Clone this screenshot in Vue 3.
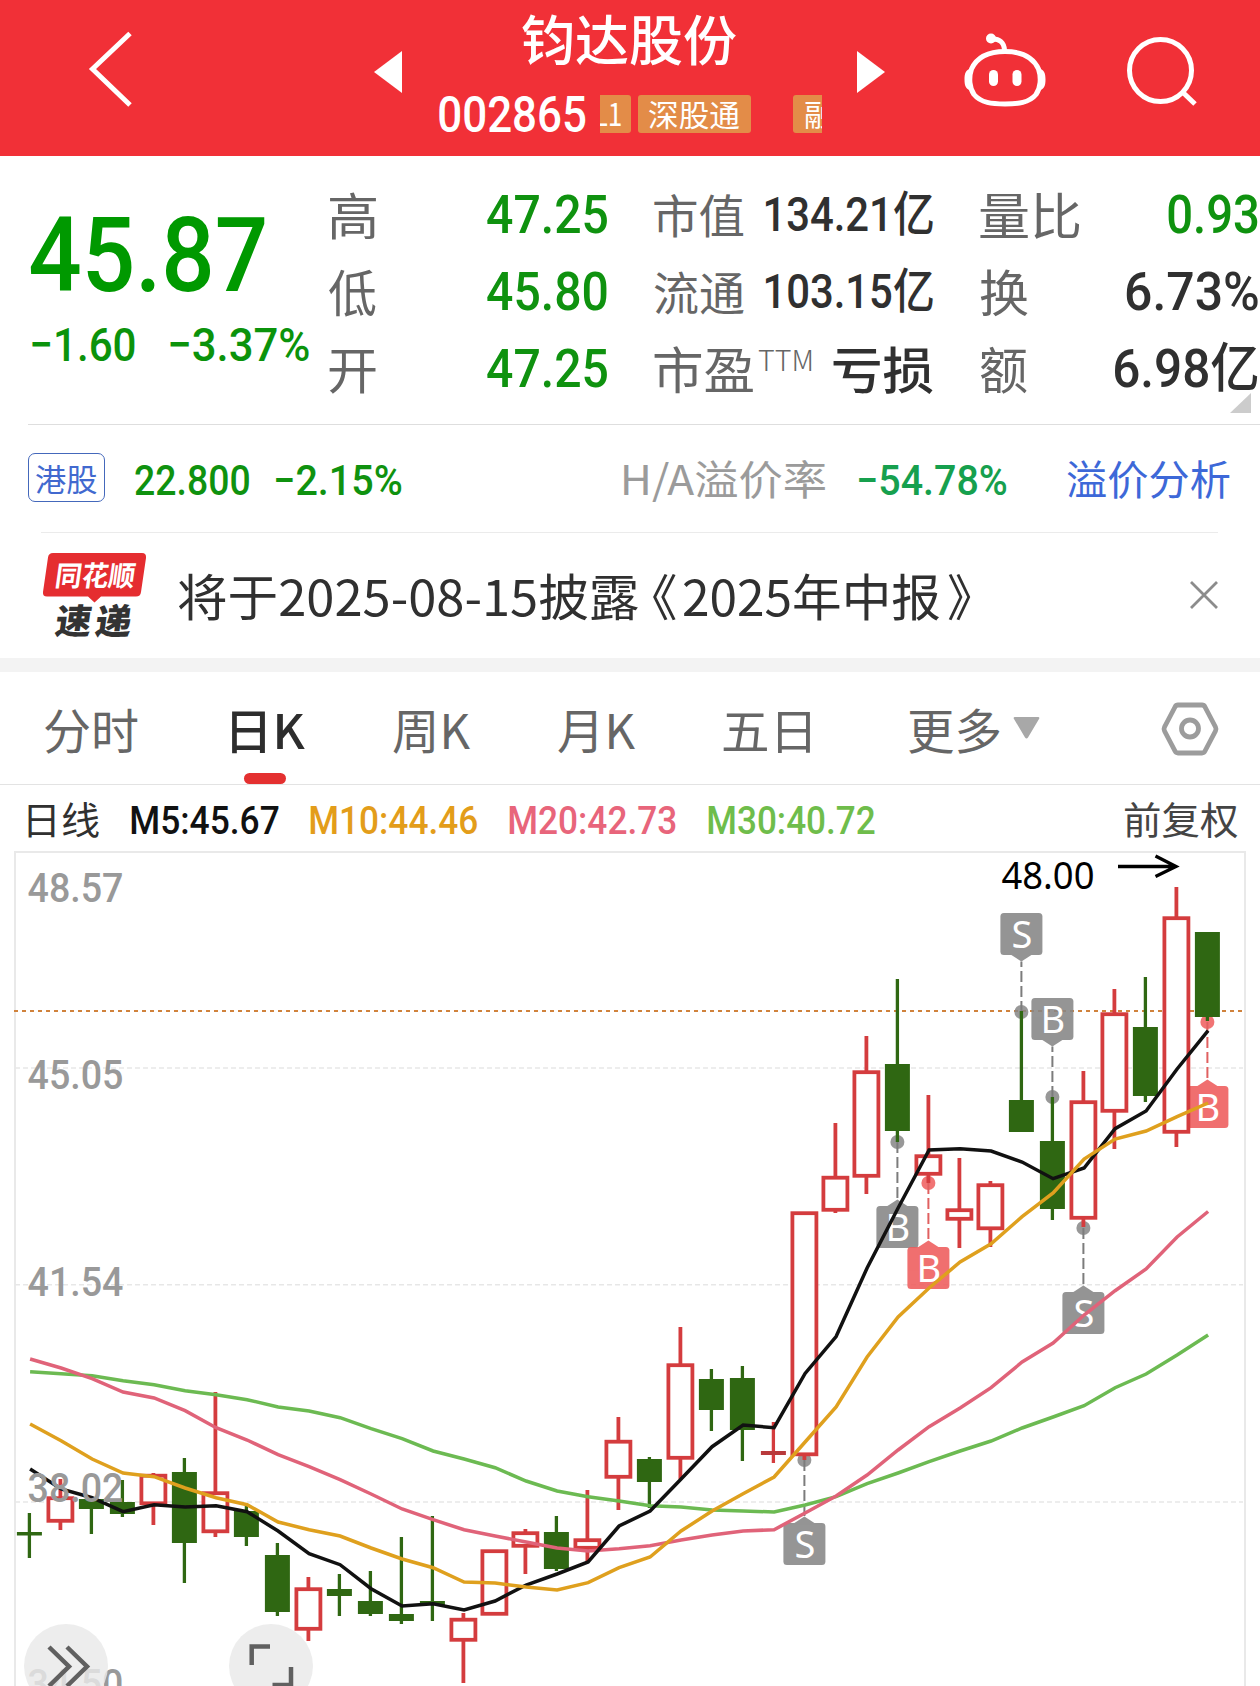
<script setup>
import { h } from 'vue'

const NUM = 'Roboto, "Noto Sans CJK SC", sans-serif'
const CJK = '"Noto Sans CJK SC", sans-serif'
const LATIN = '"Noto Sans", sans-serif'

const ctx = document.createElement('canvas').getContext('2d')

// Text whose visible ink is condensed or widened to exactly `w` pixels.
const FitText = (p) => {
  const family = p.f === 'n' ? NUM : p.f === 'l' ? LATIN : CJK
  const weight = p.wt || 400
  ctx.font = `${weight} ${p.s}px ${family}`
  const m = ctx.measureText(p.t)
  const left = -m.actualBoundingBoxLeft
  const k = p.w / (m.actualBoundingBoxRight - left)
  return h('svg', { width: p.w, height: p.h, class: 'fit' }, [
    h('text', {
      transform: `translate(${-left * k} ${p.b}) scale(${k} 1)`,
      'font-family': family,
      'font-size': p.s,
      'font-weight': weight,
      fill: 'currentColor',
    }, p.t),
  ])
}
FitText.props = ['t', 'w', 's', 'h', 'b', 'f', 'wt']

const step = 31
const cx = (i) => 29.4 + i * step

// [colour, high, body top, body bottom, low]
const candles = [
  ['g', 1513, 1532, 1535.5, 1558], ['r', 1479, 1496.5, 1522.5, 1530], ['g', 1499, 1499, 1509, 1534],
  ['g', 1480, 1502, 1514, 1517], ['r', 1473, 1474, 1505, 1525], ['g', 1458, 1472, 1543, 1583],
  ['r', 1392, 1491.5, 1533, 1537], ['g', 1504, 1511, 1537, 1546], ['g', 1543, 1555, 1612, 1616],
  ['r', 1577, 1587.5, 1630.5, 1641], ['g', 1574, 1589, 1596, 1616], ['g', 1571, 1601, 1614, 1616],
  ['g', 1537, 1614, 1621, 1624], ['g', 1516, 1601, 1605, 1621], ['r', 1613, 1618, 1641.5, 1683],
  ['r', 1550, 1549.5, 1615.5, 1615], ['r', 1529, 1531.5, 1547.5, 1574], ['g', 1516, 1532, 1569, 1571],
  ['r', 1490, 1538.5, 1549.5, 1561], ['r', 1417, 1440, 1478.5, 1510], ['g', 1457, 1459, 1482, 1508],
  ['r', 1327, 1363.5, 1459.5, 1479], ['g', 1369, 1379, 1410, 1431], ['g', 1366, 1378, 1430, 1461],
  ['d', 1422, 1451, 1455, 1463], ['r', 1212, 1211.5, 1456, 1460], ['r', 1123, 1176, 1211.5, 1213],
  ['r', 1036, 1070.5, 1177.5, 1194], ['g', 979, 1064, 1131, 1142], ['r', 1095, 1154.5, 1175.5, 1183],
  ['r', 1158, 1208.5, 1220.5, 1248], ['r', 1181, 1183.5, 1230, 1247], ['g', 1011, 1100, 1132, 1132],
  ['g', 1097, 1141, 1209, 1220], ['r', 1071, 1100.5, 1219.5, 1227], ['r', 989, 1012.5, 1112.5, 1149],
  ['g', 977, 1027, 1096, 1102], ['r', 887, 916.5, 1133.5, 1147], ['g', 932, 932, 1017, 1021],
]

const averages = [
  { c: '#6cba52', v: [1371.7, 1373.7, 1375.7, 1380.7, 1384.7, 1390.7, 1394.7, 1399.7, 1407, 1411, 1417.7, 1428.7, 1438.7, 1451, 1459, 1467.7, 1481, 1491, 1496.7, 1501, 1505.7, 1507, 1510, 1511, 1512, 1505, 1496.7, 1483.7, 1473, 1461.7, 1451, 1441, 1428, 1417, 1405.7, 1387.7, 1374, 1355, 1335] },
  { c: '#e06379', v: [1359, 1368, 1378.7, 1392, 1398, 1410.7, 1427.7, 1440, 1454.7, 1466.7, 1479.7, 1494, 1509, 1519.7, 1529.7, 1536, 1542, 1548, 1551, 1548.7, 1545.7, 1540, 1535, 1531, 1529.7, 1513, 1496, 1475, 1450, 1426.7, 1408, 1387.7, 1362, 1343, 1315, 1290.7, 1269, 1237, 1211.5] },
  { c: '#111', v: [1469, 1489, 1497.7, 1511.7, 1504.7, 1507, 1505.7, 1511.7, 1531, 1553.7, 1564.7, 1588.7, 1606, 1603.7, 1610, 1601, 1585, 1574, 1562, 1526, 1511, 1479, 1446.7, 1425, 1427.7, 1373.5, 1336.5, 1268, 1208, 1150, 1148.7, 1151, 1162, 1178.7, 1168, 1128.7, 1111, 1069, 1030.7] },
  { c: '#dfa01e', v: [1424, 1440.7, 1459, 1473, 1476.7, 1488, 1497.7, 1504.7, 1522, 1529.7, 1536, 1548, 1559, 1567.7, 1582, 1583, 1587, 1590, 1582.7, 1567.7, 1557, 1531, 1511, 1493.7, 1477, 1442, 1407, 1357, 1317, 1288, 1262, 1243.7, 1216.7, 1193, 1159, 1139, 1131, 1116.7, 1103] },
]
const line = (v) => v.map((y, i) => `${cx(i) + 0.7},${y}`).join(' ')

// Trade markers: candle index, letter, dot y, tip y; `up` means the badge sits below its dot.
const marks = [
  { i: 25, l: 'S', dot: 1460, tip: 1516.5, up: true },
  { i: 28, l: 'B', dot: 1142, tip: 1199.5, up: true },
  { i: 29, l: 'B', dot: 1183, tip: 1240.5, up: true, red: true },
  { i: 32, l: 'S', dot: 1012, tip: 961.5 },
  { i: 33, l: 'B', dot: 1097, tip: 1046.5 },
  { i: 34, l: 'S', dot: 1228, tip: 1285.5, up: true },
  { i: 38, l: 'B', dot: 1022, tip: 1079.5, up: true, red: true },
].map((m) => {
  const x = cx(m.i)
  const top = m.up ? m.tip + 6.5 : m.tip - 48.5
  return {
    ...m, x, top,
    color: m.red ? '#ee5c5c' : '#868686',
    tri: m.up
      ? `M${x - 10} ${top}L${x} ${m.tip}L${x + 10} ${top}Z`
      : `M${x - 10} ${top + 42}L${x} ${m.tip}L${x + 10} ${top + 42}Z`,
  }
})

const axis = [['48.57', 901.7], ['45.05', 1088.5], ['41.54', 1295.5], ['38.02', 1501.5], ['34.50', 1698]]
</script>

<template>
  <div class="app">
    <header class="bar">
      <svg class="back" width="50" height="80" viewBox="85 30 50 80">
        <path d="M130 33.500L92.500 69L130 105" fill="none" stroke="#fff" stroke-width="5" />
      </svg>
      <svg class="prev" width="28" height="42" viewBox="0 0 28 42"><path d="M28 0V42L0 21Z" fill="#fff" /></svg>
      <div class="name">
        <FitText t="钧达股份" :w="214" :s="54" :h="84" :b="60.500" :wt="500" />
        <div class="codes">
          <FitText class="code" t="002865" f="n" :w="147" :s="49.500" :h="48" :b="48" :wt="500" />
          <div class="tags">
            <span class="tag t1"><FitText t="L1" :w="25" :s="32" :h="38" :b="31" /></span>
            <span class="tag t2"><FitText t="深股通" :w="91" :s="30" :h="38" :b="31" /></span>
            <span class="tag t3"><FitText t="融" :w="29" :s="30" :h="38" :b="31" /></span>
          </div>
        </div>
      </div>
      <svg class="next" width="28" height="42" viewBox="0 0 28 42"><path d="M0 0V42L28 21Z" fill="#fff" /></svg>
      <svg class="robot" width="90" height="84" viewBox="960 28 90 84">
        <g fill="none" stroke="#fff" stroke-width="5" stroke-linecap="round">
          <path d="M1005 51.500C1022 51.500 1033 57 1038.500 69C1041.500 78 1040.500 88 1036 94.500C1029 103 1018 104 1005 104C992 104 981 103 974 94.500C969.500 88 968.500 78 971.500 69C977 57 988 51.500 1005 51.500Z" />
          <path d="M992 39C999 38.500 1004 42 1004.500 50" />
        </g>
        <circle cx="991" cy="38.500" r="5" fill="#fff" />
        <rect x="989" y="70" width="9" height="16" rx="4.500" fill="#fff" />
        <rect x="1012.500" y="70" width="9" height="16" rx="4.500" fill="#fff" />
        <path d="M972 68.500C966 69 964.500 73 964.500 79.500S966 90 972 90.500ZM1038 68.500C1044 69 1045.500 73 1045.500 79.500S1044 90 1038 90.500Z" fill="#fff" />
      </svg>
      <svg class="search" width="80" height="80" viewBox="1122 32 80 80">
        <circle cx="1160.500" cy="70.500" r="31" fill="none" stroke="#fff" stroke-width="5" />
        <path d="M1183 92.500L1195 104" stroke="#fff" stroke-width="5" stroke-linecap="butt" />
      </svg>
    </header>

    <section class="quote">
      <div class="last">
        <FitText class="price" t="45.87" f="n" :w="234.500" :s="104" :h="135" :b="135" :wt="500" />
        <div class="delta">
          <FitText t="−1.60" f="n" :w="103" :s="47" :h="60" :b="60" :wt="500" />
          <FitText t="−3.37%" f="n" :w="139" :s="47" :h="60" :b="60" :wt="500" />
        </div>
      </div>
      <div class="col">
        <div class="row"><FitText t="高" :w="47" :s="50" :h="77" :b="60" /><FitText class="g" t="47.25" f="n" :w="120" :s="53" :h="77" :b="57.700" :wt="500" /></div>
        <div class="row"><FitText t="低" :w="47" :s="50" :h="77" :b="59.500" /><FitText class="g" t="45.80" f="n" :w="120" :s="53" :h="77" :b="57.700" :wt="500" /></div>
        <div class="row"><FitText t="开" :w="47" :s="50" :h="77" :b="59.500" /><FitText class="g" t="47.25" f="n" :w="120" :s="53" :h="77" :b="57.700" :wt="500" /></div>
      </div>
      <div class="col">
        <div class="row"><FitText t="市值" :w="90" :s="46" :h="77" :b="58" /><FitText class="k" t="134.21亿" f="n" :w="168" :s="48" :h="77" :b="56" :wt="500" /></div>
        <div class="row"><FitText t="流通" :w="90" :s="46" :h="77" :b="58" /><FitText class="k" t="103.15亿" f="n" :w="168" :s="48" :h="77" :b="56" :wt="500" /></div>
        <div class="row">
          <FitText t="市盈" :w="99" :s="50" :h="77" :b="59.500" />
          <FitText class="ttm" t="TTM" :w="54" :s="28" :h="77" :b="42" :wt="300" />
          <FitText class="k" t="亏损" :w="100" :s="50" :h="77" :b="59.500" :wt="500" />
        </div>
      </div>
      <div class="col">
        <div class="row"><FitText t="量比" :w="100" :s="50" :h="77" :b="59.500" /><FitText class="g" t="0.93" f="n" :w="90" :s="53" :h="77" :b="57.700" :wt="500" /></div>
        <div class="row"><FitText t="换" :w="48" :s="50" :h="77" :b="59.500" /><FitText class="k" t="6.73%" f="n" :w="132" :s="53" :h="77" :b="57.700" :wt="500" /></div>
        <div class="row"><FitText t="额" :w="47" :s="50" :h="77" :b="59.500" /><FitText class="k" t="6.98亿" f="n" :w="144" :s="53" :h="77" :b="57.700" :wt="500" /></div>
      </div>
      <i class="corner"></i>
    </section>

    <section class="hk">
      <span class="badge"><FitText t="港股" :w="60.500" :s="31" :h="47" :b="36.500" /></span>
      <FitText class="g" t="22.800" f="n" :w="114" :s="42" :h="70" :b="69.500" :wt="500" />
      <FitText class="g" t="−2.15%" f="n" :w="126" :s="42" :h="70" :b="69.500" :wt="500" />
      <FitText class="lbl" t="H/A溢价率" :w="201" :s="41" :h="70" :b="70" />
      <FitText class="g2" t="−54.78%" f="n" :w="148" :s="42" :h="70" :b="69.500" :wt="500" />
      <FitText class="link" t="溢价分析" :w="163" :s="41" :h="70" :b="70" />
    </section>

    <section class="news">
      <svg class="logo" width="104" height="90" viewBox="43 552 104 90">
        <path d="M53 553H142Q146.500 553 146 558L141 592Q140.500 596.500 136 596.500H101L94.500 602.500L88 596.500H47Q42.500 596.500 43 592L48 557.500Q48.500 553 53 553Z" fill="#e52d30" />
        <g font-family="Noto Sans CJK SC, sans-serif" font-weight="900">
          <text transform="translate(54 585.500) skewX(-8)" font-size="28" textLength="80" lengthAdjust="spacingAndGlyphs" fill="#fff" font-weight="700">同花顺</text>
          <text transform="translate(54 633.500) skewX(-8)" font-size="35" textLength="36" lengthAdjust="spacingAndGlyphs" fill="#333">速</text>
          <text transform="translate(94 633.500) skewX(-8)" font-size="35" textLength="36" lengthAdjust="spacingAndGlyphs" fill="#333">递</text>
        </g>
      </svg>
      <div class="headline">
        <FitText t="将于2025-08-15披露" :w="461" :s="49.500" :h="120" :b="83" />
        <FitText class="open" t="《" :w="23" :s="49.500" :h="120" :b="83" />
        <FitText class="report" t="2025年中报" :w="256.500" :s="49.500" :h="120" :b="83" />
        <FitText t="》" :w="23" :s="49.500" :h="120" :b="83" />
      </div>
      <svg class="close" width="28" height="28" viewBox="0 0 28 28"><path d="M1 1L27 27M27 1L1 27" stroke="#8c8c8c" stroke-width="2.800" /></svg>
    </section>

    <nav class="tabs">
      <FitText t="分时" :w="93" :s="48" :h="111" :b="76.500" />
      <span class="on"><FitText t="日K" :w="73" :s="48" :h="101" :b="76.500" :wt="500" /><i></i></span>
      <FitText t="周K" :w="77" :s="48" :h="111" :b="76.500" />
      <FitText t="月K" :w="77" :s="48" :h="111" :b="76.500" />
      <FitText t="五日" :w="87" :s="48" :h="111" :b="76.500" />
      <FitText t="更多" :w="91" :s="48" :h="111" :b="76.500" />
      <svg class="caret" width="27" height="22" viewBox="0 0 27 22"><path d="M1.500 0H25.500Q27 .5 26 2L15 20.500Q13.500 22.500 12 20.500L1 2Q0 .5 1.500 0Z" fill="#a8a8a8" /></svg>
      <svg class="gear" width="58" height="54" viewBox="0 0 58 54">
        <path d="M17 3H41Q43 3 44 5L54.500 25Q55.500 27 54.500 29L44 49Q43 51 41 51H17Q15 51 14 49L3.500 29Q2.500 27 3.500 25L14 5Q15 3 17 3Z" fill="none" stroke="#9c9c9c" stroke-width="4.800" />
        <circle cx="29" cy="26.500" r="8.500" fill="none" stroke="#9c9c9c" stroke-width="4.800" />
      </svg>
    </nav>

    <div class="legend">
      <FitText class="k" t="日线" :w="71" :s="38" :h="63" :b="48.500" />
      <FitText class="m5" t="M5:45.67" f="n" :w="147.500" :s="39.500" :h="63" :b="48.500" :wt="500" />
      <FitText class="m10" t="M10:44.46" f="n" :w="167" :s="39.500" :h="63" :b="48.500" :wt="500" />
      <FitText class="m20" t="M20:42.73" f="n" :w="167" :s="39.500" :h="63" :b="48.500" :wt="500" />
      <FitText class="m30" t="M30:40.72" f="n" :w="166.500" :s="39.500" :h="63" :b="48.500" :wt="500" />
      <FitText class="adj" t="前复权" :w="112.500" :s="38" :h="63" :b="48.500" />
    </div>

    <section class="chart">
      <svg class="plot" width="1260" height="838" viewBox="0 848 1260 838">
        <path d="M15 1700V852H1245V1700" fill="none" stroke="#e9e9e9" stroke-width="2" />
        <path d="M15 1068H1243M15 1284.700H1243M15 1502H1243" stroke="#e7e7e7" stroke-width="1.500" stroke-dasharray="5 3" />
        <path d="M14 1011H1243" stroke="#d0823c" stroke-width="2" stroke-dasharray="4 4" />

        <g v-for="m in marks" :key="m.i">
          <circle :cx="m.x" :cy="m.dot" r="7" :fill="m.color" opacity=".85" />
          <path :d="`M${m.x} ${m.dot}V${m.tip}`" :stroke="m.red ? '#e06060' : '#7c7c7c'" stroke-width="2" stroke-dasharray="11 4" />
          <g :fill="m.color" opacity=".88">
            <path :d="m.tri" />
            <rect :x="m.x - 21" :y="m.top" width="42" height="42" rx="3.500" />
          </g>
          <text :x="m.x + 0.5" :y="m.top + 34.500" text-anchor="middle" font-family="Noto Sans, sans-serif" font-size="38" fill="#fff">{{ m.l }}</text>
        </g>

        <g v-for="(c, i) in candles" :key="i">
          <template v-if="c[0] === 'r'">
            <path :d="`M${cx(i)} ${c[1]}V${c[2] + 1}M${cx(i)} ${c[3] - 1}V${c[4]}`" stroke="#d43c3e" stroke-width="3.800" />
            <rect :x="cx(i) - 12" :y="c[2] + 1.700" width="24" :height="c[3] - c[2] - 3.400" fill="#fff" stroke="#d43c3e" stroke-width="3.800" />
          </template>
          <template v-else>
            <path :d="`M${cx(i)} ${c[1]}V${c[4]}`" :stroke="c[0] === 'd' ? '#d43c3e' : '#2f6712'" stroke-width="3.300" />
            <rect :x="cx(i) - 12.500" :y="c[2]" width="25" :height="c[3] - c[2]" :fill="c[0] === 'd' ? '#b83a3c' : '#2f6712'" />
          </template>
        </g>

        <polyline v-for="a in averages" :key="a.c" :points="line(a.v)" fill="none" :stroke="a.c" stroke-width="3.500" />

        <g font-family="Roboto, sans-serif" font-weight="500" font-size="41.500" fill="#999">
          <text v-for="a in axis" :key="a[0]" x="27.500" :y="a[1]" textLength="96" lengthAdjust="spacingAndGlyphs">{{ a[0] }}</text>
        </g>
        <text x="1001.500" y="889" font-family="Noto Sans, sans-serif" font-size="38" textLength="93" lengthAdjust="spacingAndGlyphs" fill="#000">48.00</text>
        <path d="M1118 866.500H1175M1155.500 856L1176 866.500L1155.500 876.500" fill="none" stroke="#000" stroke-width="3.300" />
      </svg>
      <div class="tools">
        <button class="round">
          <svg width="84" height="84" viewBox="24 1624 84 84"><path d="M49 1647L69 1666.500L49 1686M67 1647L87 1666.500L67 1686" fill="none" stroke="#606060" stroke-width="4.500" /></svg>
        </button>
        <button class="round">
          <svg width="84" height="84" viewBox="229 1624 84 84"><path d="M270 1646.500H251.700V1665M291 1667V1685H272.500" fill="none" stroke="#606060" stroke-width="4.500" /></svg>
        </button>
      </div>
    </section>
  </div>
</template>

<style>
html, body { margin: 0; background: #fff; }
</style>

<style scoped>
.app { width: 1260px; height: 1686px; overflow: hidden; background: #fff; color: #666; font-family: "Noto Sans CJK SC", sans-serif; }
.app svg { display: block; flex: none; overflow: visible; }
.bar { height: 156px; background: #f13037; color: #fff; display: flex; align-items: flex-start; }
.back { margin: 30px 0 0 85px; }
.prev { margin: 51px 0 0 239px; }
.name { width: 383px; margin-left: 37px; }
.name > .fit { margin-left: 82.500px; }
.codes { display: flex; }
.code { margin-right: 14px; }
.tags { display: flex; width: 222px; margin-top: 11px; overflow: hidden; }
.tag { height: 38px; flex: none; border-radius: 3px; background: #e38c48; display: flex; justify-content: center; }
.t1 { width: 46px; margin-left: -15px; margin-right: 7px; }
.t2 { width: 113px; margin-right: 42px; }
.t3 { width: 53px; }
.next { margin: 51px 0 0 34.500px; }
.robot { margin: 28px 0 0 75px; }
.search { margin: 32px 0 0 72px; }

.quote { position: relative; height: 268px; display: grid; grid-template-columns: 299px 325px 326px 278px; padding-left: 30px; box-sizing: border-box; }
.price { color: #090; }
.delta { display: flex; gap: 35px; margin-top: 10px; color: #0b930b; margin-left: 2px; }
.col { padding-top: 19px; width: 278px; }
.col:nth-child(3) { width: 279px; }
.row { display: flex; justify-content: space-between; height: 77px; }
.ttm { margin: 0 16px 0 0; }
.g { color: #0f920f; }
.k { color: #303030; }
.corner { position: absolute; right: 9px; top: 237px; border-left: 21px solid transparent; border-bottom: 20px solid #ccc; }

.hk { height: 108px; box-sizing: border-box; margin-left: 28px; border-top: 1px solid #dedede; display: flex; align-items: flex-start; }
.badge { width: 77px; height: 49px; box-sizing: border-box; border: 1.500px solid #4468bb; border-radius: 7px; margin: 28px 30px 0 0; display: flex; justify-content: center; color: #4169cf; }
.hk .g { margin-right: 27px; }
.hk .lbl { color: #9b9b9b; margin: 0 34px 0 195px; }
.g2 { color: #16a04e; }
.link { color: #3d68d8; margin-left: 59.500px; }

.news { height: 126px; box-sizing: border-box; margin: 0 42px 0 41px; border-top: 1px solid #ebebeb; display: flex; align-items: flex-start; }
.logo { margin: 19px 31px 0 2px; }
.headline { color: #303030; display: flex; }
.open { margin: 0 7px 0 14px; }
.report { margin-right: 8.500px; }
.close { margin: 48px 0 0 219px; }

.tabs { height: 127px; box-sizing: border-box; border-top: 14px solid #f3f3f3; border-bottom: 1px solid #e3e3e3; display: flex; align-items: flex-start; padding-left: 44.500px; }
.on { color: #2d2d2d; margin: 0 88px 0 94.500px; }
.on i { display: block; width: 42px; height: 11px; border-radius: 6px; background: #e43030; margin-left: 12px; }
.tabs .fit:nth-child(4) { margin: 0 88px; }
.tabs .fit:nth-child(6) { margin: 0 13px 0 99px; }
.caret { margin-top: 45px; }
.gear { margin: 30px 0 0 121px; }

.legend { height: 63px; display: flex; padding-left: 27.500px; }
.m5 { color: #111; margin: 0 32px; }
.m10 { color: #e39d1a; margin-right: 31.500px; }
.m20 { color: #e8657b; margin-right: 32.500px; }
.m30 { color: #6fbd4b; }
.adj { color: #444; margin-left: 250px; }

.chart { position: relative; height: 838px; }
.tools { position: absolute; left: 24px; top: 776px; display: flex; gap: 121px; }
.round { width: 84px; height: 84px; padding: 0; border: 0; border-radius: 50%; background: rgba(233, 233, 233, .82); }
</style>
